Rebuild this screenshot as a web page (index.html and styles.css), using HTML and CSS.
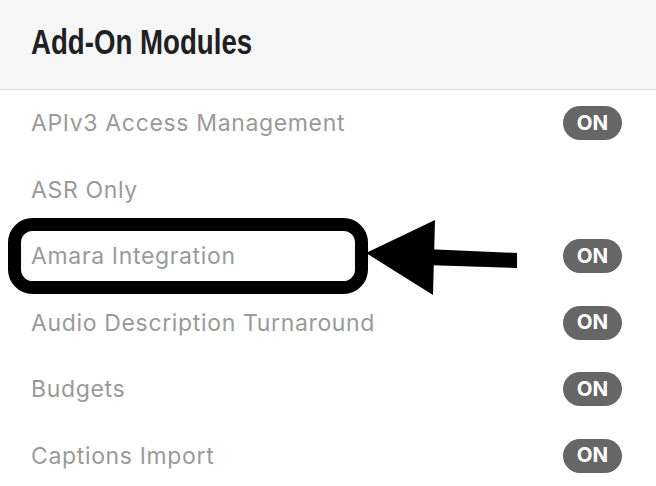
FILE: index.html
```html
<!DOCTYPE html>
<html>
<head>
<meta charset="utf-8">
<link rel="stylesheet" href="styles.css">
</head>
<body>
<div class="panel">
  <header class="header">
    <h1 class="title">Add-On Modules</h1>
  </header>
  <ul class="list">
    <li class="row"><span class="label">APIv3 Access Management</span><span class="pill">ON</span></li>
    <li class="row"><span class="label">ASR Only</span></li>
    <li class="row"><span class="label">Amara Integration</span><span class="pill">ON</span></li>
    <li class="row"><span class="label">Audio Description Turnaround</span><span class="pill">ON</span></li>
    <li class="row"><span class="label">Budgets</span><span class="pill">ON</span></li>
    <li class="row"><span class="label">Captions Import</span><span class="pill">ON</span></li>
  </ul>
  <svg class="annotation" width="656" height="486" viewBox="0 0 656 486">
    <rect x="14.5" y="224.5" width="347" height="63" rx="18" ry="18" fill="none" stroke="#000" stroke-width="13"/>
    <polygon points="366,253 435,220 433,295" fill="#000"/>
    <polygon points="425,249 517,253 517,268 425,265" fill="#000"/>
  </svg>
</div>
</body>
</html>
```
FILE: styles.css
```css
* { box-sizing: border-box; }
html, body { margin: 0; padding: 0; background: #fff; }
body { width: 656px; height: 486px; overflow: hidden; font-family: Inter, "Liberation Sans", sans-serif; }
.panel { position: relative; width: 656px; height: 486px; }
.header {
  height: 90px;
  background: #f6f6f6;
  border-bottom: 1px solid #d9d9d9;
  display: flex;
  align-items: center;
  padding: 0 31px 6px;
}
.title {
  margin: 0;
  font-family: "Liberation Sans", Arial, sans-serif;
  font-weight: 700;
  font-size: 35px;
  line-height: 1;
  color: #1f2024;
  transform: scaleX(0.79);
  transform-origin: left center;
  white-space: nowrap;
}
.list { list-style: none; margin: 0; padding: 0; }
.row {
  height: 66.5px;
  display: flex;
  align-items: center;
  justify-content: space-between;
  padding: 0 34px 0 31px;
}
.label {
  font-size: 23px;
  color: #9a9a9a;
  letter-spacing: 0.65px;
}
.pill {
  width: 59px;
  height: 34px;
  border-radius: 17px;
  background: #666;
  color: #fff;
  font-weight: 700;
  font-size: 20.5px;
  display: flex;
  align-items: center;
  justify-content: center;
  padding-bottom: 2px;
}
.annotation { position: absolute; left: 0; top: 0; pointer-events: none; }
```
